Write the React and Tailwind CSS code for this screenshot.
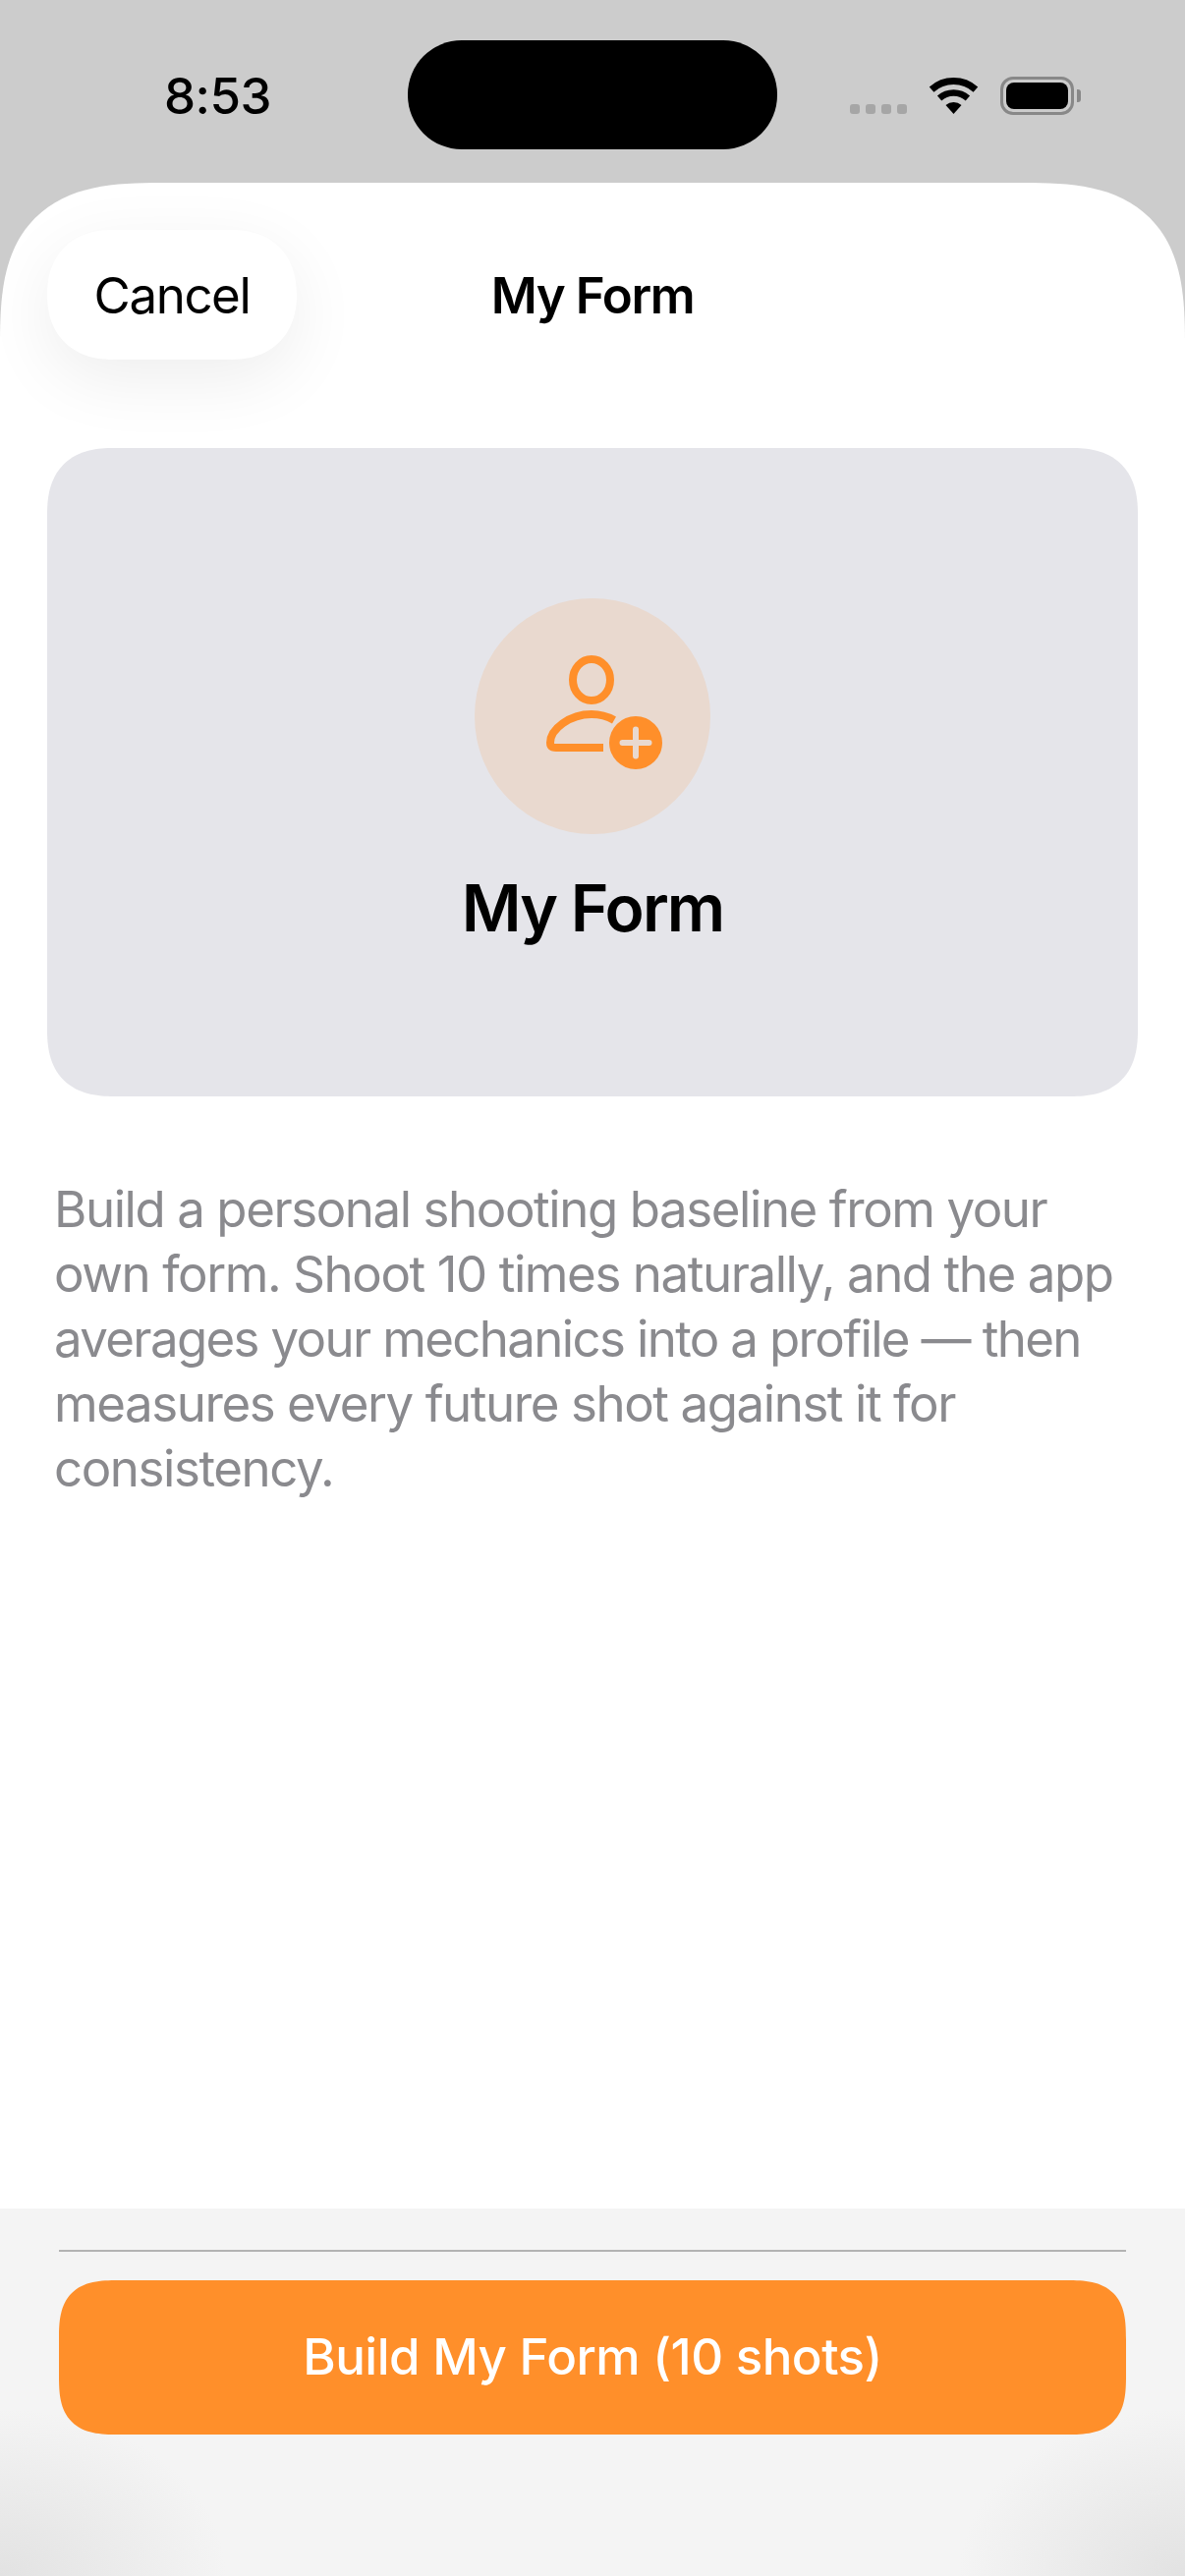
import React from 'react';

const StatusBar = () => (
    <div className="h-[186px] shrink-0 relative flex items-start pt-[41px] pl-[167px]">
        <span className="w-[248px] mt-[31px] text-[51px] leading-[52px] font-medium tracking-[-0.5px] text-black">8:53</span>
        <div className="w-[376px] h-[111px] rounded-[55px] bg-black" />
        <div className="flex items-start ml-[74px]">
            <div className="flex gap-[6px] mt-[65px]">
                <div className="w-[10px] h-[10px] rounded-[3px] bg-[#a6a6a6]" />
                <div className="w-[10px] h-[10px] rounded-[3px] bg-[#a6a6a6]" />
                <div className="w-[10px] h-[10px] rounded-[3px] bg-[#a6a6a6]" />
                <div className="w-[10px] h-[10px] rounded-[3px] bg-[#a6a6a6]" />
            </div>
            <svg width="51" height="37" viewBox="0 0 51 37" className="ml-[22px] mt-[38px]">
                <path d="M3.1 12.1A33.5 33.5 0 0 1 47.9 12.1" fill="none" stroke="#000" strokeWidth="7" />
                <path d="M11.1 21A21.5 21.5 0 0 1 39.9 21" fill="none" stroke="#000" strokeWidth="6.5" />
                <path d="M25.5 37L17.5 28.1A12 12 0 0 1 33.5 28.1Z" fill="#000" />
            </svg>
            <div className="ml-[22px] mt-[37px] flex items-center">
                <div className="w-[75px] h-[39px] rounded-[13px] border-[3px] border-[#888888] p-[3px]">
                    <div className="w-full h-full rounded-[8px] bg-black" />
                </div>
                <div className="w-[4px] h-[13px] ml-[3px] rounded-r-[3px] bg-[#888888]" />
            </div>
        </div>
    </div>
);

const PersonPlusIcon = () => (
    <svg width="130" height="130" viewBox="-12 4 130 130" className="overflow-visible">
        <ellipse cx="52" cy="32" rx="19" ry="21" fill="none" stroke="#ff8f2a" strokeWidth="8" />
        <path d="M75 73C68 69 60 67 52 67C30 67 10 82 10 96Q10 101 16 101L64 101" fill="none" stroke="#ff8f2a" strokeWidth="8" />
        <circle cx="97" cy="96" r="27" fill="#ff8f2a" />
        <path d="M83.5 96H110.5M97 82.5V109.5" stroke="#e9d9cf" strokeWidth="6" strokeLinecap="round" />
    </svg>
);

const App = () => {
    return (
        <div className="w-[1206px] h-[2622px] flex flex-col bg-[#cccccc] overflow-hidden font-['Inter',sans-serif]">
            <StatusBar />
            <div className="flex-1 flex flex-col bg-white rounded-t-[165px] [corner-shape:superellipse(1.5)] overflow-hidden">
                <div className="grid grid-cols-[1fr_auto_1fr] items-center pt-[48px] px-[48px]">
                    <button className="w-[254px] h-[132px] pt-[2px] rounded-[66px] [corner-shape:superellipse(1.15)] bg-white text-[51px] tracking-[-1.4px] text-black shadow-[0_20px_70px_rgba(0,0,0,0.07)]">Cancel</button>
                    <h1 className="pt-[2px] text-[51px] font-semibold tracking-[-1.4px] text-black">My Form</h1>
                    <div />
                </div>

                <div className="mt-[90px] mx-[48px] h-[660px] rounded-[68px] [corner-shape:superellipse(1.3)] bg-[#e5e5ea] flex flex-col items-center pt-[153px]">
                    <div className="w-[240px] h-[240px] rounded-full bg-[#e9d9cf] flex items-center justify-center">
                        <PersonPlusIcon />
                    </div>
                    <h2 className="mt-[35px] text-[66px] leading-[80px] font-semibold tracking-[-1.9px] text-black">My Form</h2>
                </div>

                <p className="mt-[82px] px-[55px] text-[51px] leading-[66px] tracking-[-1.43px] text-[#8a8a8e]">
                    Build a personal shooting baseline from your<br />
                    own form. Shoot 10 times naturally, and the app<br />
                    <span className="tracking-[-1.65px]">averages your mechanics into a profile — then</span><br />
                    measures every future shot against it for<br />
                    consistency.
                </p>

                <div className="mt-auto h-[374px] pt-[42px] px-[60px] bg-[#f4f4f4] bg-[radial-gradient(ellipse_230px_170px_at_0%_100%,#e2e2e2,#f4f4f4),radial-gradient(ellipse_230px_170px_at_100%_100%,#e2e2e2,#f4f4f4)] bg-blend-darken">
                    <div className="h-[2px] bg-[#b3b3b3]" />
                    <button className="w-full h-[157px] mt-[29px] rounded-[60px] [corner-shape:superellipse(1.5)] bg-[#ff8f2a] text-[51px] font-medium tracking-[-0.5px] text-white">Build My Form (10 shots)</button>
                </div>
            </div>
        </div>
    );
};

export default App;
